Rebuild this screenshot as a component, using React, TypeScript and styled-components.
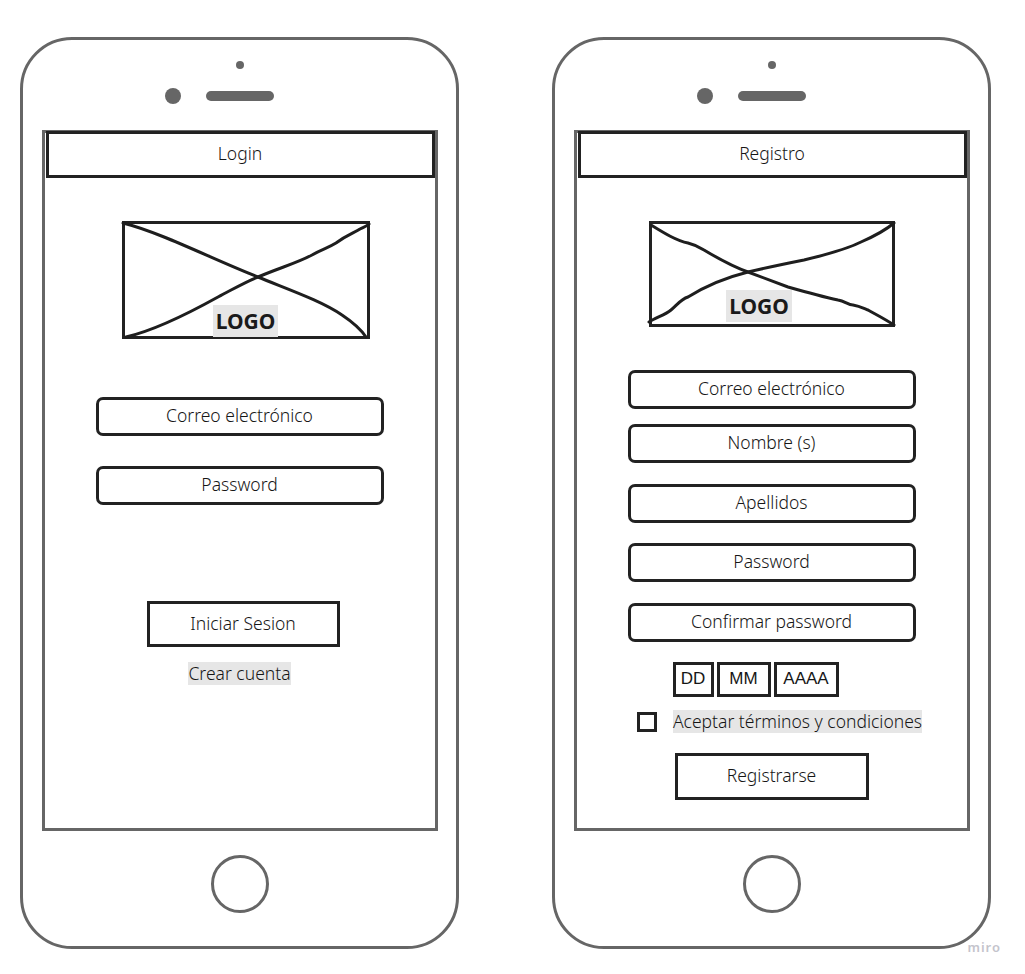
import React from "react";
import styled, { createGlobalStyle } from "styled-components";

const GlobalStyle = createGlobalStyle`
  html, body {
    margin: 0;
    padding: 0;
    background: #fff;
  }
  body {
    font-family: "Noto Sans", "Open Sans", sans-serif;
    color: #161616;
  }
  * {
    box-sizing: border-box;
  }
`;

export default function App() {
    return <>
        <GlobalStyle/>
        <Page>
            <Phone>
                <Dot/>
                <SensorRow>
                    <Camera/>
                    <Speaker/>
                </SensorRow>
                <Screen>
                    <Header>Login</Header>
                    <LogoBox $w={248} $h={118} $shift={12}>
                        <Scribble viewBox="0 0 248 118" width={248} height={118}>
                            <path d="M1 2 C 40 12, 90 38, 136 56 C 165 68, 200 80, 220 94 C 232 102, 240 110, 244 116"/>
                            <path d="M4 116 C 30 110, 60 96, 96 76 C 115 66, 125 60, 136 56 C 160 46, 175 42, 190 34 C 200 28, 206 27, 214 22 C 225 14, 232 12, 238 8 C 242 6, 245 5, 247 3"/>
                        </Scribble>
                        <LogoLabel $bottom={-1} $shift={0}>LOGO</LogoLabel>
                    </LogoBox>
                    <Field $top={58}>Correo electrónico</Field>
                    <Field $top={30}>Password</Field>
                    <SquareButton $top={96} $w={193} $h={46} $shift={7}>Iniciar Sesion</SquareButton>
                    <Highlight $top={15}>Crear cuenta</Highlight>
                </Screen>
                <HomeButton/>
            </Phone>

            <Phone>
                <Dot/>
                <SensorRow>
                    <Camera/>
                    <Speaker/>
                </SensorRow>
                <Screen>
                    <Header>Registro</Header>
                    <LogoBox $w={246} $h={106} $shift={0}>
                        <Scribble viewBox="0 0 246 106" width={246} height={106}>
                            <path d="M2 4 C 15 12, 28 20, 39 22 C 47 24, 52 27, 55 29 C 70 38, 85 46, 99 51 C 115 57, 128 62, 139 66 C 160 72, 175 76, 189 79 C 196 80, 199 84, 204 84 C 210 85, 214 87, 219 89 C 228 94, 236 98, 245 104"/>
                            <path d="M0 101 C 8 96, 16 94, 22 89 C 28 84, 32 78, 39 76 C 55 66, 75 57, 99 51 C 120 46, 140 42, 155 39 C 180 33, 200 27, 212 21 C 228 14, 238 8, 245 2"/>
                        </Scribble>
                        <LogoLabel $bottom={2} $shift={-25}>LOGO</LogoLabel>
                    </LogoBox>
                    <Field $top={43}>Correo electrónico</Field>
                    <Field $top={15}>Nombre (s)</Field>
                    <Field $top={21}>Apellidos</Field>
                    <Field $top={20}>Password</Field>
                    <Field $top={21}>Confirmar password</Field>
                    <DateRow>
                        <DateBox $w={41}>DD</DateBox>
                        <DateBox $w={54}>MM</DateBox>
                        <DateBox $w={65}>AAAA</DateBox>
                    </DateRow>
                    <CheckRow>
                        <CheckBox/>
                        <Highlight $top={0}>Aceptar términos y condiciones</Highlight>
                    </CheckRow>
                    <SquareButton $top={20} $w={194} $h={47} $shift={0}>Registrarse</SquareButton>
                </Screen>
                <HomeButton/>
            </Phone>

            <Watermark>miro</Watermark>
        </Page>
    </>
}


const Page = styled.div`
  position: relative;
  width: 1025px;
  height: 974px;
  display: flex;
  align-items: flex-start;
  gap: 93px;
  padding: 37px 0 0 20px;
  overflow: hidden;
`

const Phone = styled.div`
  width: 439px;
  height: 912px;
  border: 3px solid #666;
  border-radius: 52px;
  display: flex;
  flex-direction: column;
  align-items: center;
  flex-shrink: 0;
`

const Dot = styled.div`
  width: 8px;
  height: 8px;
  margin-top: 21px;
  border-radius: 50%;
  background: #666;
`

const SensorRow = styled.div`
  width: 100%;
  height: 16px;
  margin-top: 19px;
  display: grid;
  grid-template-columns: 1fr 68px 1fr;
  align-items: center;
`

const Camera = styled.div`
  justify-self: end;
  width: 16px;
  height: 16px;
  margin-right: 25px;
  border-radius: 50%;
  background: #666;
`

const Speaker = styled.div`
  width: 68px;
  height: 10px;
  border-radius: 5px;
  background: #666;
`

const Screen = styled.div`
  width: 396px;
  height: 701px;
  margin-top: 26px;
  border: 3px solid #666;
  display: flex;
  flex-direction: column;
  align-items: center;
  font-size: 17.5px;
  font-weight: 330;
`

const HomeButton = styled.div`
  width: 58px;
  height: 58px;
  margin-top: 24px;
  border: 3px solid #666;
  border-radius: 50%;
`

const Header = styled.div`
  align-self: stretch;
  height: 47px;
  margin: -2px 0 0 1px;
  padding-bottom: 3px;
  border: 3px solid #222;
  display: flex;
  align-items: center;
  justify-content: center;
`

const LogoBox = styled.div<{ $w: number; $h: number; $shift: number }>`
  position: relative;
  width: ${p => p.$w}px;
  height: ${p => p.$h}px;
  margin: 43px 0 0 ${p => p.$shift}px;
  border: 3px solid #222;
  display: flex;
  align-items: flex-end;
  justify-content: center;
`

const Scribble = styled.svg`
  position: absolute;
  top: -3px;
  left: -3px;
  overflow: visible;

  path {
    fill: none;
    stroke: #1e1e1e;
    stroke-width: 3;
    stroke-linecap: round;
  }
`

const LogoLabel = styled.span<{ $bottom: number; $shift: number }>`
  position: relative;
  margin-bottom: ${p => p.$bottom}px;
  margin-left: ${p => p.$shift}px;
  padding: 0 3px;
  background: #e6e6e6;
  font-size: 21px;
  font-weight: 700;
  line-height: 32px;
  color: #1a1a1a;
`

const Field = styled.div<{ $top: number }>`
  width: 288px;
  height: 39px;
  margin-top: ${p => p.$top}px;
  padding-bottom: 3px;
  border: 3px solid #222;
  border-radius: 7px;
  display: flex;
  align-items: center;
  justify-content: center;
`

const SquareButton = styled.div<{ $top: number; $w: number; $h: number; $shift: number }>`
  width: ${p => p.$w}px;
  height: ${p => p.$h}px;
  margin-top: ${p => p.$top}px;
  margin-left: ${p => p.$shift}px;
  padding-bottom: 3px;
  border: 3px solid #222;
  display: flex;
  align-items: center;
  justify-content: center;
`

const Highlight = styled.span<{ $top: number }>`
  margin-top: ${p => p.$top}px;
  background: #e6e6e6;
  line-height: 23px;
`

const DateRow = styled.div`
  display: flex;
  gap: 3px;
  margin: 20px 32px 0 0;
`

const DateBox = styled.div<{ $w: number }>`
  width: ${p => p.$w}px;
  height: 35px;
  padding-bottom: 2px;
  border: 3px solid #222;
  display: flex;
  align-items: center;
  justify-content: center;
  font-family: "Liberation Sans", Arial, sans-serif;
  font-size: 17px;
  font-weight: 400;
`

const CheckRow = styled.div`
  display: flex;
  align-items: center;
  gap: 16px;
  margin: 13px 0 0 16px;
`

const CheckBox = styled.div`
  width: 20px;
  height: 20px;
  border: 3px solid #222;
`

const Watermark = styled.span`
  position: absolute;
  right: 24px;
  bottom: 18px;
  font-size: 13px;
  font-weight: 600;
  letter-spacing: 1px;
  color: #c4c4cc;
`
